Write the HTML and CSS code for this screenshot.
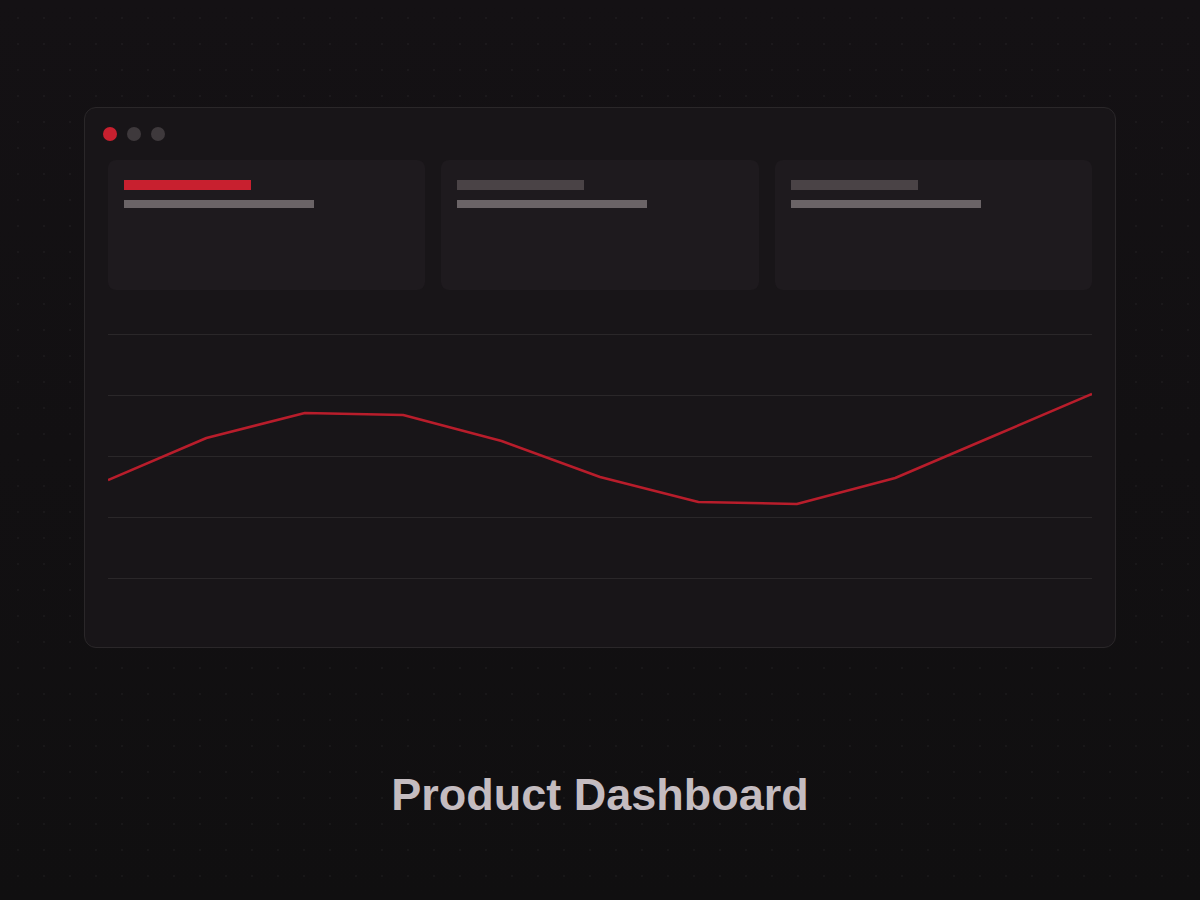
FILE: index.html
```html
<!DOCTYPE html>
<html lang="en">
<head>
    <meta charset="UTF-8">
    <meta name="viewport" content="width=device-width, initial-scale=1.0">
    <title>Product Dashboard</title>
    <link rel="stylesheet" href="styles.css">
</head>
<body>
    <div class="stage">
        <div class="window">
            <div class="window-bar">
                <span class="dot dot-red"></span>
                <span class="dot"></span>
                <span class="dot"></span>
            </div>
            <div class="cards">
                <div class="card">
                    <div class="bar bar-title bar-accent"></div>
                    <div class="bar bar-sub"></div>
                </div>
                <div class="card">
                    <div class="bar bar-title"></div>
                    <div class="bar bar-sub"></div>
                </div>
                <div class="card">
                    <div class="bar bar-title"></div>
                    <div class="bar bar-sub"></div>
                </div>
            </div>
            <svg class="chart" viewBox="0 0 984 330" width="984" height="330">
                <g class="grid">
                    <line x1="0" y1="44.5" x2="984" y2="44.5"/>
                    <line x1="0" y1="105.5" x2="984" y2="105.5"/>
                    <line x1="0" y1="166.5" x2="984" y2="166.5"/>
                    <line x1="0" y1="227.5" x2="984" y2="227.5"/>
                    <line x1="0" y1="288.5" x2="984" y2="288.5"/>
                </g>
                <polyline class="trend" points="0,190 98.4,148 196.8,123 295.2,125 393.6,151 492,187 590.4,212 688.8,214 787.2,188 885.6,146 984,104"/>
            </svg>
        </div>
    </div>
    <h1 class="caption">Product Dashboard</h1>
</body>
</html>
```

FILE: styles.css
```css
html, body { height: 100%; }
body {
    margin: 0;
    font-family: "Liberation Sans", Arial, sans-serif;
    background-color: #111012;
    background-image:
        radial-gradient(circle, rgba(255,255,255,0.035) 1px, transparent 1.5px),
        linear-gradient(180deg, #141114 0%, #100f10 100%);
    background-size: 26px 26px, 100% 100%;
    background-position: 5px 5px, 0 0;
    overflow: hidden;
}
.stage { padding: 107px 84px 0; }
.window {
    height: 541px;
    box-sizing: border-box;
    overflow: hidden;
    background: #181518;
    border: 1px solid #2a2729;
    border-radius: 12px;
    padding: 19px 23px 0;
}
.window-bar { display: flex; gap: 10px; margin-left: -5px; }
.dot { width: 14px; height: 14px; border-radius: 50%; background: #3e393c; }
.dot-red { background: #c8202f; }
.cards {
    display: grid;
    grid-template-columns: repeat(3, 1fr);
    gap: 16px;
    margin-top: 19px;
}
.card {
    height: 130px;
    background: #1e1a1e;
    border-radius: 8px;
    padding: 20px 16px 0;
    box-sizing: border-box;
}
.bar { height: 8px; background: #6b6467; }
.bar-title { width: 127px; height: 10px; background: #4a4346; margin-bottom: 10px; }
.bar-accent { background: #c8202f; }
.bar-sub { width: 190px; }
.chart { display: block; }
.grid line { stroke: #2a2729; stroke-width: 1; }
.trend { fill: none; stroke: #b81d2b; stroke-width: 2.5; stroke-linejoin: round; }
.caption {
    margin: 121px 0 0;
    text-align: center;
    font-size: 45px;
    font-weight: bold;
    color: #c4bcc0;
}
```
